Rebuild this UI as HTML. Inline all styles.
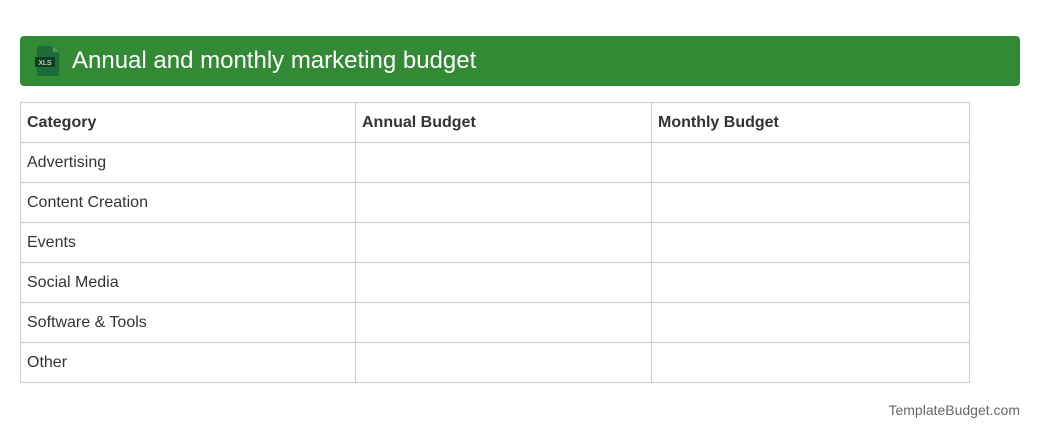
<!DOCTYPE html>
<html><head><meta charset="utf-8"><style>
body{margin:0;width:1040px;height:440px;background:#fff;font-family:"Liberation Sans",Arial,sans-serif;position:relative;overflow:hidden}
.hdr{position:absolute;left:20px;top:36px;width:1000px;height:50px;background:#338a35;border-radius:4px}
.hdr .t{position:absolute;left:52px;top:11px;color:#fff;font-size:24px;line-height:28px}
.ic{position:absolute;left:15px;top:10px}
table{position:absolute;left:20px;top:102px;border-collapse:collapse;font-size:16px;color:#333}
td,th{border:1px solid #ccc;height:40px;padding:0 0 0 6px;box-sizing:border-box}
th{text-align:left;font-weight:bold}
.f{position:absolute;right:20px;top:402px;font-size:14px;color:#666}
</style></head><body>
<div class="hdr">
<svg class="ic" width="26" height="32" viewBox="0 0 26 32"><path d="M2 0H18L24 6V30H2Z" fill="#1f6b3a"/><path d="M18 0V6H24Z" fill="#4a9a5a"/><rect x="0" y="11" width="20" height="10" fill="#0f3d22"/><text x="10" y="19" font-size="7" fill="#fff" text-anchor="middle" font-family="Liberation Sans">XLS</text></svg>
<div class="t">Annual and monthly marketing budget</div>
</div>
<table>
<tr><th style="width:335px">Category</th><th style="width:296px">Annual Budget</th><th style="width:318px">Monthly Budget</th></tr>
<tr><td>Advertising</td><td></td><td></td></tr>
<tr><td>Content Creation</td><td></td><td></td></tr>
<tr><td>Events</td><td></td><td></td></tr>
<tr><td>Social Media</td><td></td><td></td></tr>
<tr><td>Software &amp; Tools</td><td></td><td></td></tr>
<tr><td>Other</td><td></td><td></td></tr>
</table>
<div class="f">TemplateBudget.com</div>
</body></html>
